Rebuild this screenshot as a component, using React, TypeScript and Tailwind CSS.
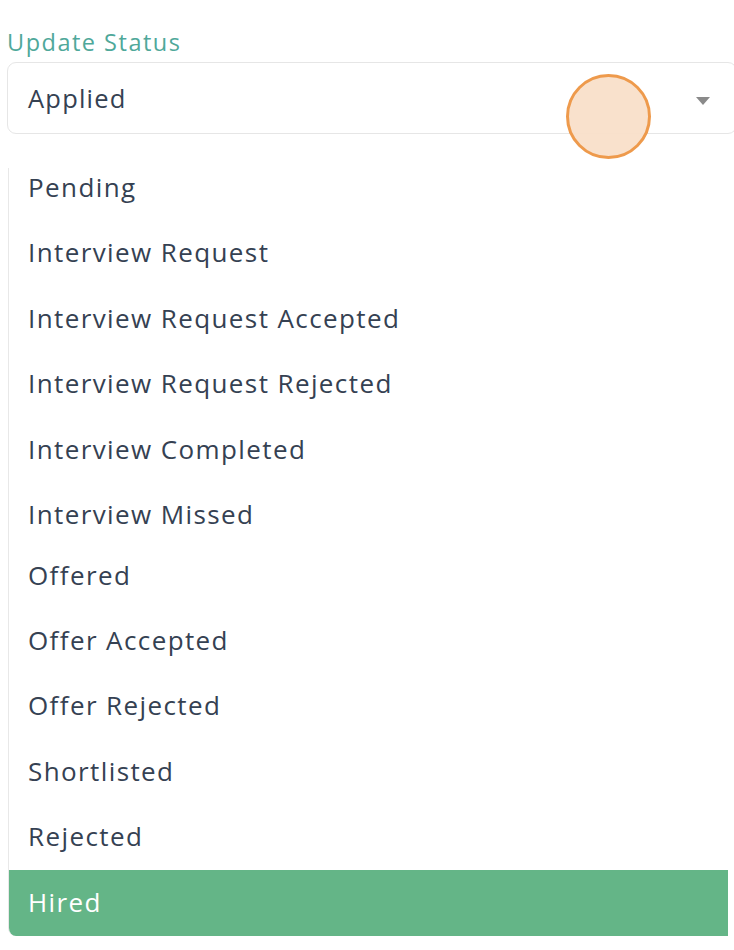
import React from "react";

const items = [
  "Pending",
  "Interview Request",
  "Interview Request Accepted",
  "Interview Request Rejected",
  "Interview Completed",
  "Interview Missed",
  "Offered",
  "Offer Accepted",
  "Offer Rejected",
  "Shortlisted",
  "Rejected",
];

export default function App() {
  return (
    <div
      className="w-[734px] h-[950px] bg-white overflow-hidden relative"
      style={{ fontFamily: '"Open Sans", "Noto Sans", sans-serif' }}
    >
      <div className="pt-[27px] pl-[7px]">
        <div className="text-[23.5px] leading-[30px] text-[#4fa89a] tracking-[1.5px]">Update Status</div>
        <div className="mt-[5px] w-[730px] h-[72px] border border-[#e6e6e6] rounded-[9px] flex items-center pl-[20px] pr-[24px] justify-between">
          <span className="text-[25.5px] text-[#354152] tracking-[1.2px]">Applied</span>
          <svg width="16" height="9" viewBox="0 0 16 9" className="mt-[6px] mr-[1px]">
            <path d="M1 0 H15 L8 8 Z" fill="#8a8a8a" />
          </svg>
        </div>
        <div className="mt-[34px] w-[720px] ml-[1px] h-[768px] border-l border-[#e8e8e8] rounded-bl-[8px] overflow-hidden">
          <div className="-mt-[13.5px] flex flex-col">
            {items.map((t, i) => (
              <div
                key={t}
                className={`pl-[19px] flex items-center text-[26px] text-[#354152] tracking-[1.4px] ${i === 6 ? "h-[60px] pb-[4px]" : "h-[65.5px]"}`}
              >
                {t}
              </div>
            ))}
            <div className="pl-[19px] h-[66px] flex items-center text-[26px] text-white bg-[#64b587] tracking-[1.4px]">
              Hired
            </div>
          </div>
        </div>
      </div>
      <div className="absolute left-[566px] top-[74px] w-[85px] h-[85px] rounded-full border-[3px] border-[#ee9a4c] bg-[#f9dfc9]/95" />
    </div>
  );
}
